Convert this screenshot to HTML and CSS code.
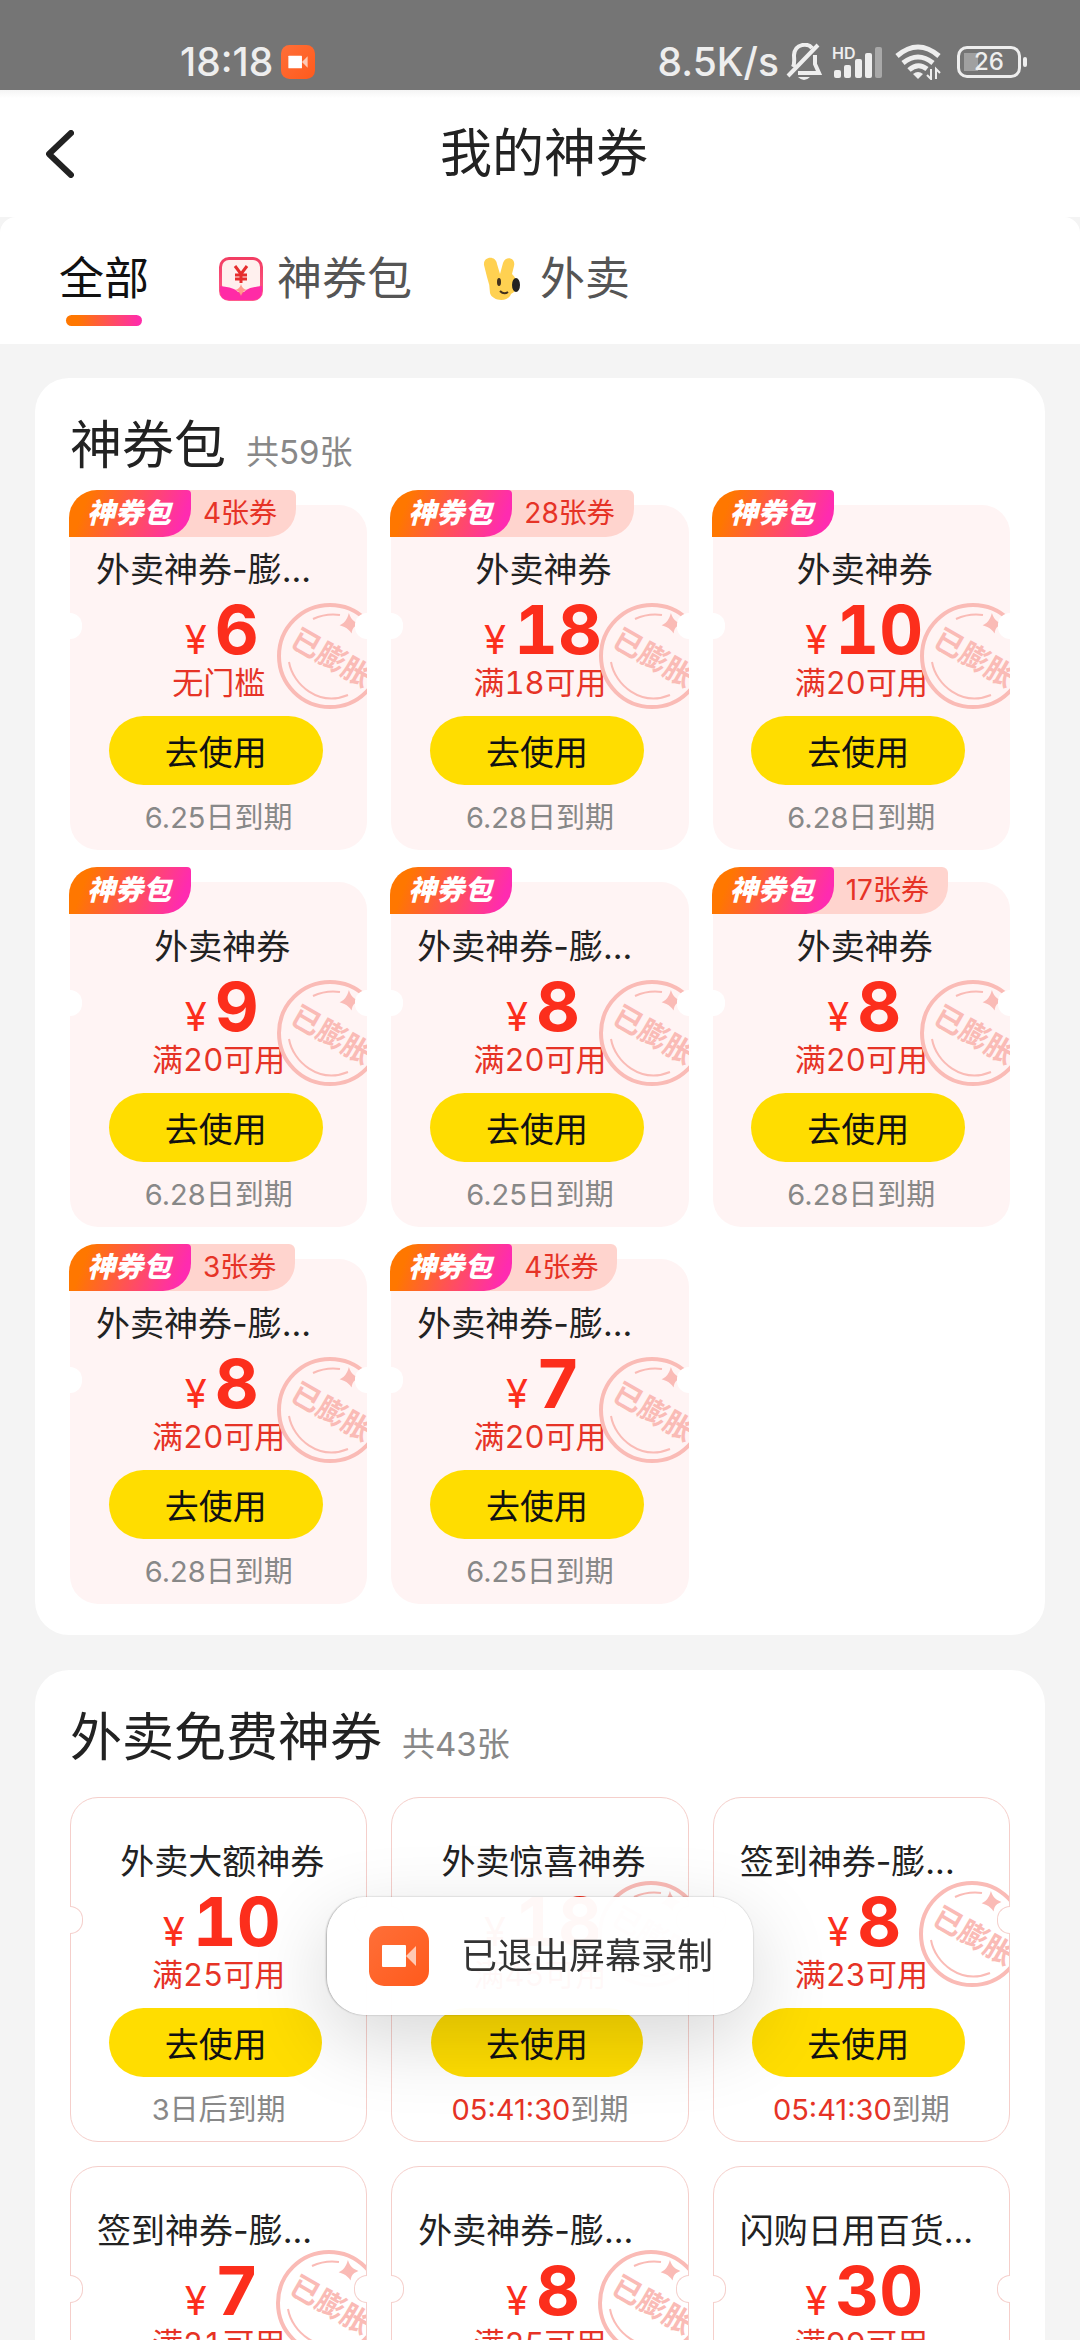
FILE: index.html
```
<!DOCTYPE html>
<html lang="zh-CN">
<head>
    <meta charset="UTF-8">
    <meta name="viewport" content="width=device-width, initial-scale=1.0">
    <title>我的神券</title>
    <link rel="stylesheet" href="styles.css">
</head>
<body>
    <!-- Shared icons -->
    <svg class="sprite" aria-hidden="true">
        <defs>
            <linearGradient id="recBg" x1="0" y1="0" x2="1" y2="1">
                <stop offset="0" stop-color="#ff6f38"/>
                <stop offset="1" stop-color="#ff5a1c"/>
            </linearGradient>
        </defs>
        <symbol id="icon-record" viewBox="0 0 60 60">
            <rect width="60" height="60" rx="15" fill="url(#recBg)"/>
            <rect x="13" y="19" width="24" height="22" rx="1" fill="#fff"/>
            <path d="M37 30L47 20V40Z" fill="#ffc9b3"/>
        </symbol>
        <symbol id="stamp-lines" viewBox="0 0 106 106">
            <circle cx="53" cy="53" r="51" fill="none" stroke="currentColor" stroke-width="4"/>
            <path d="M36 16Q49 10 63 12M12 59C16 82 42 104 71 92" fill="none" stroke="currentColor" stroke-width="2"/>
            <path d="M72 13Q74 18 80 21Q75 23 74 28Q71 24 65 22Q70 19 72 13Z" fill="currentColor" stroke="currentColor" stroke-width="2"/>
        </symbol>
    </svg>

    <div class="status-bar">
        <div class="status-left">
            <span>18:18</span>
            <svg class="rec-small"><use href="#icon-record"/></svg>
        </div>
        <div class="status-right">
            <span>8.5K/s</span>
            <svg class="bell" viewBox="0 0 36 38" fill="none" stroke="#eee" stroke-width="4">
                <path d="M7 24C9 20 8 16 8 12C9 0 22 0 26 5M29 12V21L33 30H12M2 33L32 2"/>
                <path d="M12 34H24Q18 40 12 34Z" fill="#eee" stroke="none"/>
            </svg>
            <div class="signal">
                <span class="hd">HD</span>
                <svg viewBox="0 0 50 34" fill="#eee">
                    <rect x="2" y="25" width="7" height="8" rx="2"/>
                    <rect x="12" y="20" width="7" height="13" rx="2"/>
                    <rect x="23" y="14" width="7" height="19" rx="2"/>
                    <rect x="33" y="8" width="7" height="25" rx="2"/>
                    <rect x="43" y="2" width="7" height="31" rx="2" fill="#a8a8a8"/>
                </svg>
            </div>
            <svg class="wifi" viewBox="0 0 46 36" fill="none" stroke="#eee" stroke-width="5">
                <path d="M2 12Q23 -6 44 12M8 19Q23 7 38 19M14 26Q23 18 32 25"/>
                <path d="M18 30Q23 26 28 30L23 35Z" fill="#eee" stroke="none"/>
                <path d="M36 25V35L32 31M41 35V25L45 29" stroke-width="2"/>
            </svg>
            <div class="battery"><span>26</span></div>
        </div>
    </div>

    <header class="page-header">
        <button class="back" aria-label="返回">
            <svg viewBox="0 0 28 48" fill="none" stroke="#222" stroke-width="6" stroke-linecap="round" stroke-linejoin="round">
                <path d="M25 3L3 24L25 45"/>
            </svg>
        </button>
        <h1>我的神券</h1>
    </header>

    <div class="tabs-wrap">
        <nav class="tabs">
            <a href="#" class="tab active">全部</a>
            <a href="#packs" class="tab">
                <svg class="tab-icon" viewBox="0 0 44 44">
                    <defs>
                        <linearGradient id="packTop" x1="0" y1="0" x2="0" y2="1">
                            <stop offset="0" stop-color="#f23d62"/>
                            <stop offset="1" stop-color="#ff5c8c"/>
                        </linearGradient>
                    </defs>
                    <rect width="44" height="44" rx="10" fill="url(#packTop)"/>
                    <rect x="3" y="3" width="38" height="32" rx="7" fill="#fff0ee"/>
                    <path d="M1 29Q12 30 17 33Q20 36 22 38Q24 36 27 33Q32 30 43 29V34Q43 43 34 43H10Q1 43 1 34Z" fill="#ff2ba6"/>
                    <path d="M22 27Q23 32 28 33Q23 34 22 39Q21 34 16 33Q21 32 22 27Z" fill="#ff9b8c"/>
                    <path d="M16 9L22 17L28 9M22 17V26M16 18H28M16 22H28" fill="none" stroke="#e62e2e" stroke-width="3"/>
                </svg>
                神券包
            </a>
            <a href="#free" class="tab">
                <svg class="tab-icon" viewBox="0 0 44 44">
                    <path d="M5 20L2 8C1 -1 14 -2 15 7L18 17L21 6C24 -2 34 1 32 9L30 17C37 24 37 33 29 37C26 46 10 44 8 36Q8 28 5 20Z" fill="#ffd151"/>
                    <ellipse cx="17" cy="25" rx="2" ry="4" fill="#42311d"/>
                    <ellipse cx="34" cy="28" rx="4" ry="7" fill="#222"/>
                    <path d="M18 34Q22 38 26 35" fill="none" stroke="#42311d" stroke-width="2"/>
                </svg>
                外卖
            </a>
        </nav>
    </div>

    <main>
        <section class="panel" id="packs">
            <div class="panel-head">
                <h2>神券包</h2>
                <span>共59张</span>
            </div>
            <div class="grid">
                <article class="coupon">
                    <div class="tag"><b>神券包</b><span>4张券</span></div>
                    <div class="stamp"><svg><use href="#stamp-lines"/></svg><span>已膨胀</span></div>
                    <h3 class="cut">外卖神券-膨...</h3>
                    <p class="price"><small>¥</small>6</p>
                    <p class="limit">无门槛</p>
                    <button class="use">去使用</button>
                    <p class="date">6.25日到期</p>
                </article>
                <article class="coupon">
                    <div class="tag"><b>神券包</b><span>28张券</span></div>
                    <div class="stamp"><svg><use href="#stamp-lines"/></svg><span>已膨胀</span></div>
                    <h3>外卖神券</h3>
                    <p class="price"><small>¥</small>18</p>
                    <p class="limit">满18可用</p>
                    <button class="use">去使用</button>
                    <p class="date">6.28日到期</p>
                </article>
                <article class="coupon">
                    <div class="tag"><b>神券包</b></div>
                    <div class="stamp"><svg><use href="#stamp-lines"/></svg><span>已膨胀</span></div>
                    <h3>外卖神券</h3>
                    <p class="price"><small>¥</small>10</p>
                    <p class="limit">满20可用</p>
                    <button class="use">去使用</button>
                    <p class="date">6.28日到期</p>
                </article>
                <article class="coupon">
                    <div class="tag"><b>神券包</b></div>
                    <div class="stamp"><svg><use href="#stamp-lines"/></svg><span>已膨胀</span></div>
                    <h3>外卖神券</h3>
                    <p class="price"><small>¥</small>9</p>
                    <p class="limit">满20可用</p>
                    <button class="use">去使用</button>
                    <p class="date">6.28日到期</p>
                </article>
                <article class="coupon">
                    <div class="tag"><b>神券包</b></div>
                    <div class="stamp"><svg><use href="#stamp-lines"/></svg><span>已膨胀</span></div>
                    <h3 class="cut">外卖神券-膨...</h3>
                    <p class="price"><small>¥</small>8</p>
                    <p class="limit">满20可用</p>
                    <button class="use">去使用</button>
                    <p class="date">6.25日到期</p>
                </article>
                <article class="coupon">
                    <div class="tag"><b>神券包</b><span>17张券</span></div>
                    <div class="stamp"><svg><use href="#stamp-lines"/></svg><span>已膨胀</span></div>
                    <h3>外卖神券</h3>
                    <p class="price"><small>¥</small>8</p>
                    <p class="limit">满20可用</p>
                    <button class="use">去使用</button>
                    <p class="date">6.28日到期</p>
                </article>
                <article class="coupon">
                    <div class="tag"><b>神券包</b><span>3张券</span></div>
                    <div class="stamp"><svg><use href="#stamp-lines"/></svg><span>已膨胀</span></div>
                    <h3 class="cut">外卖神券-膨...</h3>
                    <p class="price"><small>¥</small>8</p>
                    <p class="limit">满20可用</p>
                    <button class="use">去使用</button>
                    <p class="date">6.28日到期</p>
                </article>
                <article class="coupon">
                    <div class="tag"><b>神券包</b><span>4张券</span></div>
                    <div class="stamp"><svg><use href="#stamp-lines"/></svg><span>已膨胀</span></div>
                    <h3 class="cut">外卖神券-膨...</h3>
                    <p class="price"><small>¥</small>7</p>
                    <p class="limit">满20可用</p>
                    <button class="use">去使用</button>
                    <p class="date">6.25日到期</p>
                </article>
            </div>
        </section>

        <section class="panel" id="free">
            <div class="panel-head">
                <h2>外卖免费神券</h2>
                <span>共43张</span>
            </div>
            <div class="grid outlined">
                <article class="coupon">
                    <h3>外卖大额神券</h3>
                    <p class="price"><small>¥</small>10</p>
                    <p class="limit">满25可用</p>
                    <button class="use">去使用</button>
                    <p class="date">3日后到期</p>
                </article>
                <article class="coupon">
                    <div class="stamp"><svg><use href="#stamp-lines"/></svg><span>已膨胀</span></div>
                    <h3>外卖惊喜神券</h3>
                    <p class="price"><small>¥</small>18</p>
                    <p class="limit">满45可用</p>
                    <button class="use">去使用</button>
                    <p class="date"><time>05:41:30</time>到期</p>
                </article>
                <article class="coupon">
                    <div class="stamp"><svg><use href="#stamp-lines"/></svg><span>已膨胀</span></div>
                    <h3 class="cut">签到神券-膨...</h3>
                    <p class="price"><small>¥</small>8</p>
                    <p class="limit">满23可用</p>
                    <button class="use">去使用</button>
                    <p class="date"><time>05:41:30</time>到期</p>
                </article>
                <article class="coupon">
                    <div class="stamp"><svg><use href="#stamp-lines"/></svg><span>已膨胀</span></div>
                    <h3 class="cut">签到神券-膨...</h3>
                    <p class="price"><small>¥</small>7</p>
                    <p class="limit">满21可用</p>
                </article>
                <article class="coupon">
                    <div class="stamp"><svg><use href="#stamp-lines"/></svg><span>已膨胀</span></div>
                    <h3 class="cut">外卖神券-膨...</h3>
                    <p class="price"><small>¥</small>8</p>
                    <p class="limit">满25可用</p>
                </article>
                <article class="coupon">
                    <h3 class="cut">闪购日用百货...</h3>
                    <p class="price"><small>¥</small>30</p>
                    <p class="limit">满99可用</p>
                </article>
            </div>
        </section>
    </main>

    <div class="toast" role="status">
        <svg><use href="#icon-record"/></svg>
        <span>已退出屏幕录制</span>
    </div>
</body>
</html>
```
FILE: styles.css
```
* {
    margin: 0;
    padding: 0;
    box-sizing: border-box;
}

body {
    height: 100vh;
    display: flex;
    flex-direction: column;
    overflow: hidden;
    background-color: #f4f4f4;
    color: #222;
    font-family: Inter, "Noto Sans CJK SC", sans-serif;
}

button {
    border: none;
    font-family: inherit;
    cursor: pointer;
}

.sprite {
    position: absolute;
    width: 0;
    height: 0;
}

/* Status bar */
.status-bar {
    flex: none;
    height: 90px;
    padding: 34px 53px 0 180px;
    display: flex;
    justify-content: space-between;
    background: #757575;
    color: #eee;
    font-size: 39px;
    font-weight: 500;
    line-height: 56px;
}

.status-left,
.status-right {
    display: flex;
    align-items: center;
}

.status-left {
    gap: 8px;
}

.rec-small {
    width: 34px;
    height: 34px;
}

.bell {
    width: 36px;
    height: 38px;
    margin-left: 7px;
}

.signal {
    position: relative;
    width: 50px;
    height: 34px;
    margin-left: 10px;
}

.signal svg {
    display: block;
}

.hd {
    position: absolute;
    top: 0;
    left: 0;
    font-size: 16px;
    font-weight: 600;
    line-height: 16px;
}

.wifi {
    width: 46px;
    height: 36px;
    margin-left: 13px;
}

.battery {
    position: relative;
    width: 64px;
    height: 32px;
    margin: 0 6px 0 16px;
    border: 3px solid #eee;
    border-radius: 10px;
    background: linear-gradient(#a0a0a0, #a0a0a0) 4px 4px / 14px 18px no-repeat;
    font-size: 24px;
    line-height: 26px;
    text-align: center;
}

.battery::after {
    content: "";
    position: absolute;
    top: 8px;
    right: -9px;
    width: 4px;
    height: 10px;
    border-radius: 2px;
    background: #eee;
}

/* Header */
.page-header {
    flex: none;
    height: 127px;
    padding: 0 38px 0 46px;
    display: grid;
    grid-template-columns: 60px 1fr 60px;
    align-items: center;
    background: linear-gradient(#f4f4f4, #fff 8px);
}

.back {
    background: none;
    text-align: left;
}

.back svg {
    display: block;
    width: 28px;
    height: 48px;
}

h1,
h2 {
    font-size: 52px;
    font-weight: 400;
    line-height: 72px;
}

h1 {
    text-align: center;
}

/* Tabs */
.tabs-wrap {
    flex: none;
    background: #f4f4f4;
}

.tabs {
    height: 127px;
    padding: 30px 59px 0;
    display: flex;
    align-items: flex-start;
    gap: 70px;
    border-radius: 16px 16px 0 0;
    background: #fff;
}

.tab {
    display: flex;
    align-items: center;
    gap: 14px;
    color: #555;
    font-size: 45px;
    line-height: 64px;
    text-decoration: none;
}

.tab.active {
    position: relative;
    color: #111;
}

.tab.active::after {
    content: "";
    position: absolute;
    top: 68px;
    left: 7px;
    right: 7px;
    height: 11px;
    border-radius: 6px;
    background: linear-gradient(90deg, #ff7700 15%, #ff2da8 95%);
}

.tab-icon {
    width: 44px;
    height: 44px;
}

/* Coupon panels */
main {
    flex: 1;
    min-height: 0;
    padding: 34px 35px;
    overflow-y: auto;
    scrollbar-width: none;
}

.panel {
    margin-bottom: 35px;
    padding: 32px 35px 31px;
    border-radius: 34px;
    background: #fff;
}

.panel-head {
    display: flex;
    align-items: baseline;
    gap: 20px;
    height: 95px;
}

.panel-head span {
    color: #888;
    font-size: 33px;
}

.grid {
    display: grid;
    grid-template-columns: repeat(3, 1fr);
    gap: 32px 24px;
}

.coupon {
    position: relative;
    height: 345px;
    padding-top: 40px;
    border-radius: 28px;
    background: #fff4f4;
    text-align: center;
}

/* Ticket notches */
.coupon::before,
.coupon::after {
    content: "";
    position: absolute;
    top: 108px;
    width: 12px;
    height: 26px;
    background: #fff;
}

.coupon::before {
    left: 0;
    border-radius: 0 13px 13px 0;
}

.coupon::after {
    right: 0;
    border-radius: 13px 0 0 13px;
}

.tag {
    position: absolute;
    top: -15px;
    left: -1px;
    display: flex;
    font-size: 28px;
    line-height: 47px;
}

.tag b {
    z-index: 1;
    padding: 0 20px 0 18px;
    border-radius: 28px 4px 28px 0;
    background: linear-gradient(110deg, #ff7700 15%, #ff2bb0 90%);
    color: #fff;
    font-style: italic;
    font-weight: 900;
}

.tag span {
    margin-left: -28px;
    padding: 0 19px 0 40px;
    border-radius: 0 6px 28px 0;
    background: #ffd4ce;
    color: #e63326;
}

.coupon h3 {
    height: 50px;
    padding: 0 19px 0 26px;
    font-size: 34px;
    font-weight: 400;
    line-height: 50px;
    white-space: nowrap;
}

.coupon h3.cut {
    text-align: left;
}

.price {
    height: 68px;
    padding-left: 6px;
    color: #fc2e1c;
    font-size: 68px;
    font-weight: 700;
    font-variant-numeric: tabular-nums;
    line-height: 68px;
}

.price small {
    margin-right: 8px;
    font-size: 40px;
    font-weight: 400;
}

.limit {
    color: #e63326;
    font-size: 31px;
    font-variant-numeric: tabular-nums;
    line-height: 40px;
}

.use {
    display: block;
    width: 72%;
    height: 69px;
    margin: 13px 0 0 13%;
    border-radius: 35px;
    background: #ffdd00;
    color: #111;
    font-size: 34px;
}

.date {
    margin-top: 13px;
    color: #888;
    font-size: 29px;
    line-height: 40px;
}

.date time {
    color: #e63326;
}

.stamp {
    position: absolute;
    top: 98px;
    right: 0;
    width: 90px;
    height: 106px;
    overflow: hidden;
    color: #fabbb6;
}

.stamp svg {
    display: block;
    width: 106px;
    height: 106px;
}

.stamp span {
    position: absolute;
    top: 35px;
    left: 11px;
    font-size: 29px;
    font-weight: 700;
    line-height: 40px;
    white-space: nowrap;
    transform: rotate(30deg);
}

/* White tickets with a thin outline */
.outlined {
    row-gap: 24px;
}

.outlined .coupon {
    padding-top: 39px;
    border: 1px solid #f5cfcb;
    background: #fff;
}

.outlined .coupon::before,
.outlined .coupon::after {
    border: 1px solid #f5cfcb;
}

.outlined .coupon::before {
    left: -1px;
    border-left: none;
}

.outlined .coupon::after {
    right: -1px;
    border-right: none;
}

.outlined .stamp {
    top: 83px;
}

/* Toast */
.toast {
    position: fixed;
    left: 50%;
    bottom: 325px;
    display: flex;
    align-items: center;
    gap: 32px;
    height: 118px;
    padding: 0 40px 0 42px;
    border-radius: 38px;
    background: rgba(255, 255, 255, 0.97);
    box-shadow: 0 0 2px rgba(0, 0, 0, 0.3), 0 24px 80px rgba(0, 0, 0, 0.16);
    color: #333;
    font-size: 36px;
    line-height: 48px;
    white-space: nowrap;
    transform: translateX(-50%);
}

.toast svg {
    width: 60px;
    height: 60px;
}
```
